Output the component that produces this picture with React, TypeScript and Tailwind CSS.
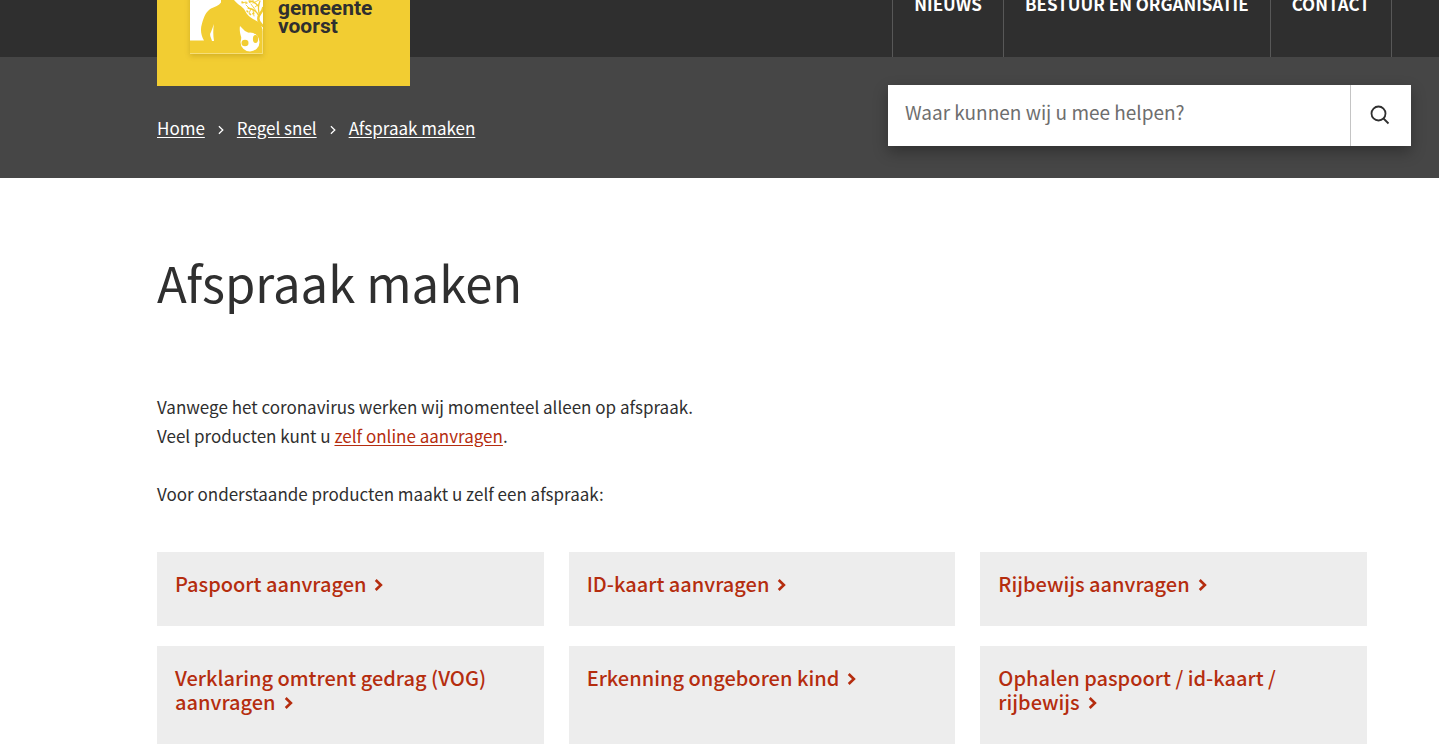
import React from 'react';

interface LinkItem {
  label: string;
  href: string;
}

const navItems: LinkItem[] = [
  { label: 'Nieuws', href: '#nieuws' },
  { label: 'Bestuur en organisatie', href: '#bestuur' },
  { label: 'Contact', href: '#contact' },
];

const breadcrumbs: LinkItem[] = [
  { label: 'Home', href: '#home' },
  { label: 'Regel snel', href: '#regel-snel' },
  { label: 'Afspraak maken', href: '#afspraak-maken' },
];

const products: LinkItem[] = [
  { label: 'Paspoort aanvragen', href: '#paspoort' },
  { label: 'ID-kaart aanvragen', href: '#id-kaart' },
  { label: 'Rijbewijs aanvragen', href: '#rijbewijs' },
  { label: 'Verklaring omtrent gedrag (VOG) aanvragen', href: '#vog' },
  { label: 'Erkenning ongeboren kind', href: '#erkenning' },
  { label: 'Ophalen paspoort / id-kaart / rijbewijs', href: '#ophalen' },
];

const Chevron: React.FC<{ className: string; strokeWidth: number }> = ({ className, strokeWidth }) => (
  <svg viewBox="0 0 8 12" fill="none" stroke="currentColor" strokeWidth={strokeWidth} className={className} aria-hidden="true">
    <path d="M1.2 1 6.4 6 1.2 11" />
  </svg>
);

const LogoPicture = () => (
  <svg viewBox="0 0 73 74" className="h-[74px] w-[73px] shadow-[0_2px_5px_rgba(120,90,0,0.25)]" aria-hidden="true">
    <rect width="73" height="74" fill="#fff" />
    {/* player */}
    <path
      fill="#f2cd32"
      d="M31 8h13v12c2 3 6 5 10 9 2 3 3 6 6 8 4 3 9 4 11 8l2 6v23H0V60.500h14c-3-5-4-11-2-17 2-7 4-12 9-15 4-2 8-3 10-6z"
    />
    <path fill="#fff" d="M24 44c-1 5-1 11 0 17h-2c-1-4-3-6-1-9z" />
    {/* tree */}
    <g fill="none" stroke="#f2cd32" strokeLinecap="round">
      <path strokeWidth="2.4" d="M73 46C68 42 67 38 70 34c2-3 3-4 3-6" />
      <path strokeWidth="1.3" d="M69 36c-2-5-6-7-11-8m11 5c-1-5-1-8 1-12m-2 5c-2-3-5-5-9-5" />
      <path strokeWidth="0.9" d="m61 29-2 4m4-3 1 6m-5-8-3-3m10 6-5-7m2-1 6-3m0 4-4 3m-9-5-4 1" />
      <path strokeWidth="1.6" strokeDasharray="1 3" d="M52 22c4 2 8 1 12-3M57 31l4 4 3-2" />
    </g>
    {/* ball */}
    <circle cx="60" cy="62" r="9.500" fill="#fff" />
    <path fill="#fff" d="m50 46 5 5 4 2-7 7c-1-4-3-9-2-14z" />
    <g fill="#f2cd32">
      <ellipse cx="55" cy="63" rx="3.500" ry="3.200" />
      <ellipse cx="65.500" cy="59" rx="2.600" ry="4" />
    </g>
    <path fill="none" stroke="#fff" strokeWidth="1" d="M72.500 50v23.500H0" opacity=".35" />
  </svg>
);

const App: React.FC = () => {
  return (
    <div className="min-h-screen overflow-hidden bg-white font-['Noto_Sans_CJK_JP',sans-serif] text-[#2f2f2f]">
      <header>
        {/* Main bar, scrolled partly out of view */}
        <div className="-mt-10 flex items-stretch justify-between bg-[#2f2f2f] pr-[47px] pl-[157px]">
          <a
            href="#home"
            className="relative z-10 -mb-[29px] flex w-[253px] items-end gap-[15px] bg-[#f2cd32] pb-8 pl-[33px] font-['Roboto',sans-serif] text-[21px] leading-[18px] font-bold"
          >
            <LogoPicture />
            <span className="pb-[19px]">
              gemeente
              <br />
              voorst
            </span>
          </a>
          <nav className="flex border-r border-[#585858]">
            {navItems.map((item) => (
              <a
                key={item.label}
                href={item.href}
                className="border-l border-[#585858] px-[21px] pt-8 pb-[41px] text-[17px] leading-6 font-bold whitespace-nowrap text-white uppercase"
              >
                {item.label}
              </a>
            ))}
          </nav>
        </div>

        <div className="flex items-start justify-between bg-[#464646] pt-7 pr-7 pb-8 pl-[157px]">
          <nav aria-label="Kruimelpad" className="flex items-center pt-[29px] text-[17px] leading-7 text-white">
            {breadcrumbs.map((item, idx) => (
              <React.Fragment key={item.label}>
                {idx > 0 && <Chevron className="mx-[13px] mt-1 h-[10px] w-[6px]" strokeWidth={1.7} />}
                <a href={item.href} className="underline underline-offset-2">
                  {item.label}
                </a>
              </React.Fragment>
            ))}
          </nav>
          <form
            className="flex h-[61px] w-[523px] bg-white shadow-[0_6px_14px_rgba(0,0,0,0.3)]"
            onSubmit={(e) => e.preventDefault()}
          >
            <input
              type="search"
              aria-label="Zoeken"
              placeholder="Waar kunnen wij u mee helpen?"
              className="min-w-0 flex-1 px-[17px] pb-1.5 text-[19px] outline-none placeholder:text-[#6e6e6e]"
            />
            <button type="submit" aria-label="Zoek" className="flex w-[61px] items-center justify-center border-l border-[#c4c4c4] pr-0.5 pb-0.5">
              <svg viewBox="0 0 20 20" fill="none" stroke="#2f2f2f" strokeWidth="1.8" className="h-5 w-5" aria-hidden="true">
                <circle cx="8.500" cy="8.500" r="7" />
                <path d="m13.500 13.500 5 5" />
              </svg>
            </button>
          </form>
        </div>
      </header>

      <main className="pr-[72px] pl-[157px]">
        <h1 className="pt-[68px] text-[49px] leading-[72px]">Afspraak maken</h1>

        <div className="pt-[74px] text-[17px] leading-[29px]">
          <p>
            Vanwege het coronavirus werken wij momenteel alleen op afspraak.
            <br />
            Veel producten kunt u{' '}
            <a href="#online" className="text-[#b52d0f] underline underline-offset-2">
              zelf online aanvragen
            </a>
            .
          </p>
          <p className="pt-[29px]">Voor onderstaande producten maakt u zelf een afspraak:</p>
        </div>

        <ul className="grid grid-cols-3 gap-x-[25px] gap-y-5 pt-11">
          {products.map((item) => (
            <li key={item.label} className="flex">
              <a href={item.href} className="flex-1 bg-[#ededed] px-[18px] pt-5 pb-[30px] text-xl leading-6 font-medium text-[#b52d0f]">
                {item.label}
                <Chevron className="mb-[3px] ml-2 inline h-3 w-[9px]" strokeWidth={2.6} />
              </a>
            </li>
          ))}
        </ul>
      </main>
    </div>
  );
};

export default App;
